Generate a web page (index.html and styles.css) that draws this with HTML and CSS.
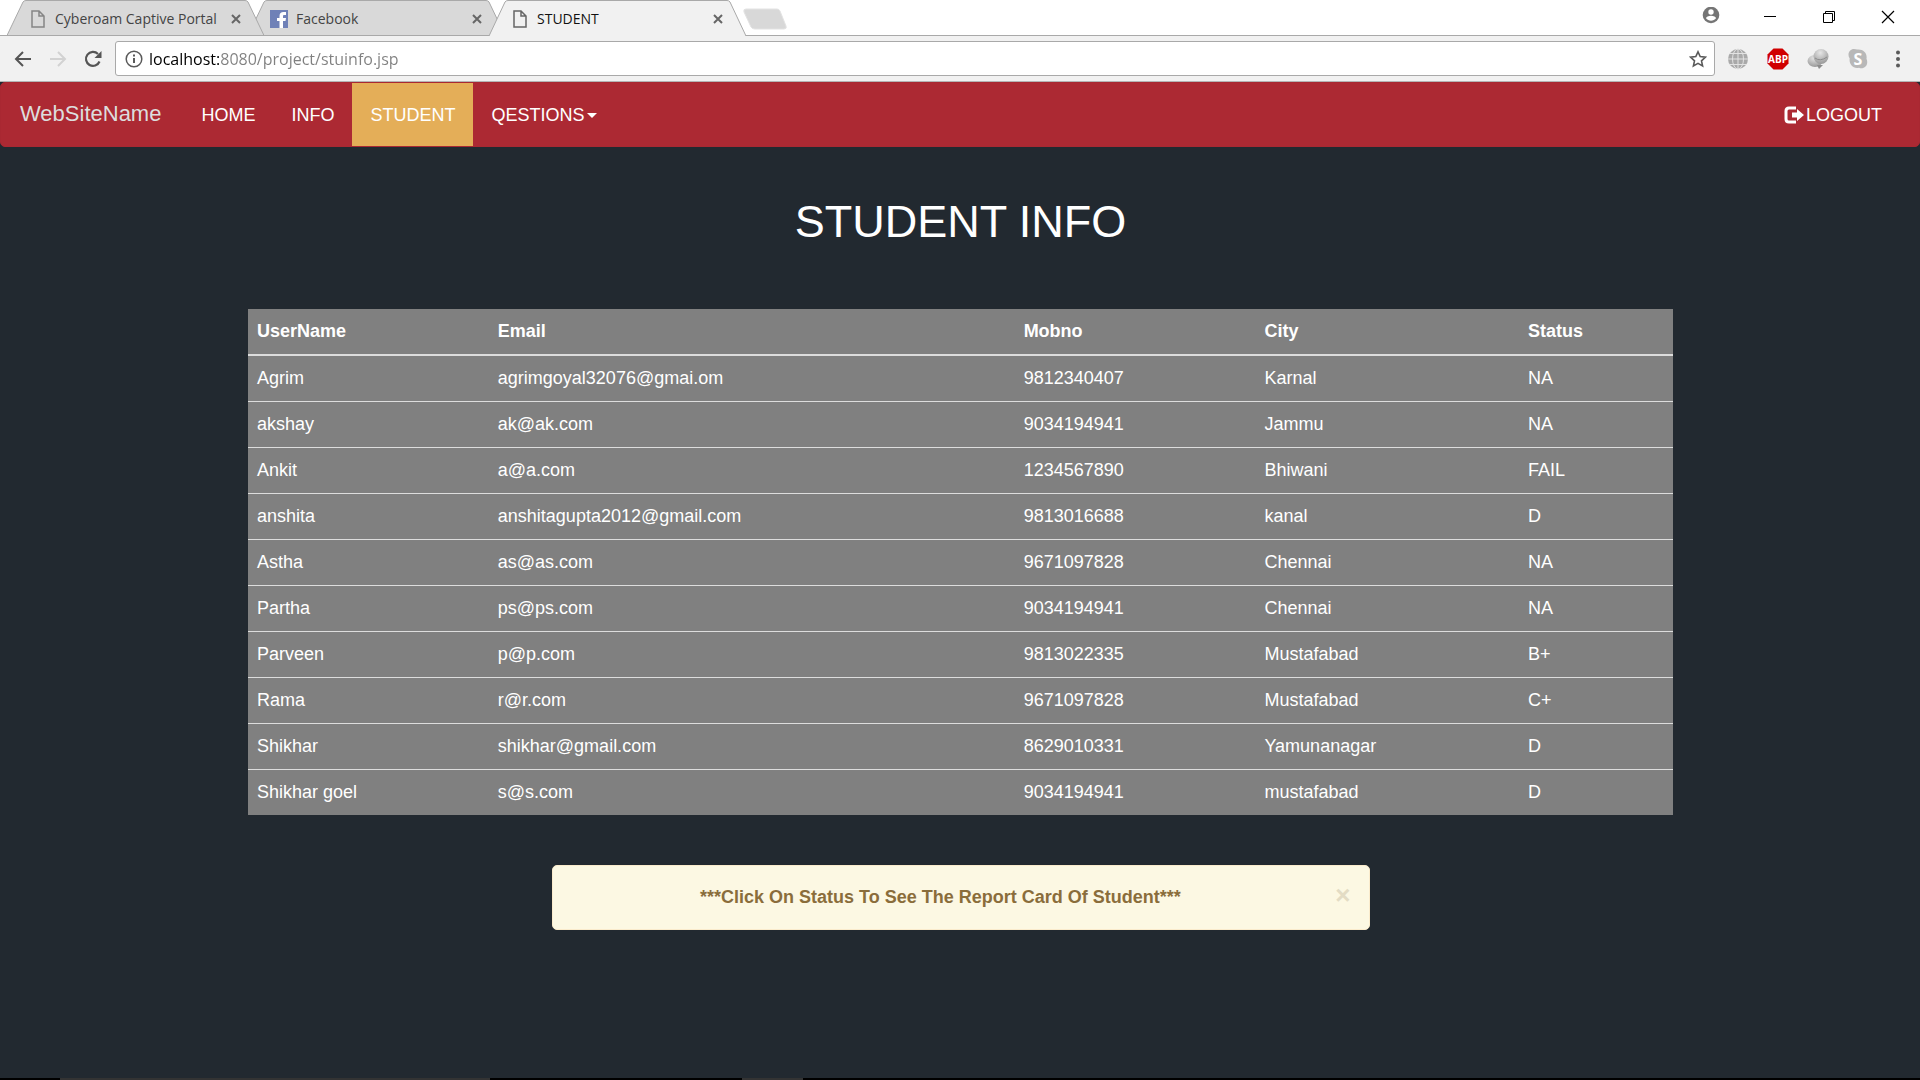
FILE: index.html
```html
<!DOCTYPE html>
<html lang="en">
<head>
<meta charset="utf-8">
<title>STUDENT</title>
<link rel="stylesheet" href="styles.css">
</head>
<body>
<div class="tabstrip">
  <div class="tab tab-first">
    <svg class="tab-shape" viewBox="0 0 257 36"><path d="M0 35.500L16 2Q17 .5 19 .5H238Q240 .5 241 2L257 35.500z" fill="#d9d9d9" stroke="#a9a9a9"/></svg>
    <svg class="tab-icon" viewBox="0 0 18 18"><path d="M3 1h7l5 5v11H3zM10 1v5h5" fill="none" stroke="#858585" stroke-width="1.500"/></svg>
    <span class="tab-title">Cyberoam Captive Portal</span>
    <button class="tab-close" aria-label="Close tab"><svg viewBox="0 0 10 10"><path d="M1 1l8 8M9 1l-8 8"/></svg></button>
  </div>
  <div class="tab">
    <svg class="tab-shape" viewBox="0 0 257 36"><path d="M0 35.500L16 2Q17 .5 19 .5H238Q240 .5 241 2L257 35.500z" fill="#d9d9d9" stroke="#a9a9a9"/></svg>
    <svg class="tab-icon" viewBox="0 0 18 18"><path d="M0 0h18v18H0z" fill="#6f81b7"/><path d="M9.500 18v-7H7V8h2.500V6c0-2.500 1.500-4 4-4H16v3h-1.500C13.300 5 13 5.500 13 6.300V8h3l-.5 3H13v7z" fill="#fff"/></svg>
    <span class="tab-title">Facebook</span>
    <button class="tab-close" aria-label="Close tab"><svg viewBox="0 0 10 10"><path d="M1 1l8 8M9 1l-8 8"/></svg></button>
  </div>
  <div class="tab tab-active">
    <svg class="tab-shape" viewBox="0 0 257 36"><path d="M0 36L16 2Q17 .5 19 .5H238Q240 .5 241 2L257 36" fill="#f1f1f1" stroke="#a9a9a9"/></svg>
    <svg class="tab-icon" viewBox="0 0 18 18"><path d="M3 1h7l5 5v11H3zM10 1v5h5" fill="none" stroke="#666" stroke-width="1.500"/></svg>
    <span class="tab-title">STUDENT</span>
    <button class="tab-close" aria-label="Close tab"><svg viewBox="0 0 10 10"><path d="M1 1l8 8M9 1l-8 8"/></svg></button>
  </div>
  <button class="new-tab" aria-label="New tab"><svg viewBox="0 0 44 22"><path d="M3 1h31q2 0 3 2l6 15q1 3-2 3H12q-3 0-4-2L1 4q-1-3 2-3z" fill="#d8d8d8" stroke="#e3e3e3"/></svg></button>
  <div class="window-controls">
    <button aria-label="Profile"><svg viewBox="0 0 18 18"><circle cx="9" cy="8" r="8.300" fill="#757575"/><circle cx="9" cy="5" r="2.700" fill="#fff"/><path d="M4 11.300c0-3.500 10-3.500 10 0-2.200 3.200-7.800 3.200-10 0z" fill="#fff"/></svg></button>
    <button aria-label="Minimize"><svg viewBox="0 0 18 18"><path d="M3 9.500h12" stroke="#000"/></svg></button>
    <button aria-label="Restore"><svg viewBox="0 0 18 18"><path d="M3.500 6.500h9v9h-9zM5.500 6.500v-2h9v9h-2" fill="none" stroke="#000"/></svg></button>
    <button aria-label="Close"><svg viewBox="0 0 18 18"><path d="M3 4l12 12M15 4L3 16" stroke="#000" stroke-width="1.200"/></svg></button>
  </div>
</div>

<div class="toolbar">
  <button class="nav-button" aria-label="Back"><svg viewBox="0 0 18 18"><path d="M17 9H2M9 2L2 9l7 7" fill="none" stroke="#555" stroke-width="2"/></svg></button>
  <button class="nav-button" aria-label="Forward"><svg viewBox="0 0 18 18"><path d="M1 9h15M9 2l7 7-7 7" fill="none" stroke="#d2d2d2" stroke-width="2"/></svg></button>
  <button class="nav-button" aria-label="Reload"><svg viewBox="0 0 18 18"><path d="M15.500 11.500A7 7 0 1 1 14 4" fill="none" stroke="#555" stroke-width="2.200"/><path d="M17.500 1v7h-7z" fill="#555"/></svg></button>
  <div class="address">
    <svg class="address-icon" viewBox="0 0 18 18"><circle cx="9" cy="9" r="7.800" fill="none" stroke="#5a5a5a" stroke-width="1.500"/><path d="M9 8v5M9 4.500v2" stroke="#5a5a5a" stroke-width="2"/></svg>
    <input class="address-input" aria-label="Address" type="text" value="localhost:8080/project/stuinfo.jsp">
    <button class="nav-button" aria-label="Bookmark"><svg viewBox="0 0 18 18"><path d="M9 1.800l2.200 4.800 5.200.6-3.900 3.600 1.100 5.200L9 13.400 4.400 16l1.100-5.200L1.600 7.200l5.200-.6z" fill="none" stroke="#5a5a5a" stroke-width="1.600"/></svg></button>
  </div>
  <div class="extensions">
    <button aria-label="Network"><svg viewBox="0 0 22 22"><circle cx="11" cy="11" r="10" fill="#a9a9a9"/><path d="M1 11h20M11 1v20M3 5.500h16M3 16.500h16" stroke="#e2e2e2"/><ellipse cx="11" cy="11" rx="5.500" ry="10" fill="none" stroke="#e2e2e2"/></svg></button>
    <button aria-label="Adblock Plus"><svg viewBox="0 0 22 22"><path d="M6.500.5h9l6 6v9l-6 6h-9l-6-6v-9z" fill="#d00000"/><text class="badge-text" x="11" y="15" text-anchor="middle">ABP</text></svg></button>
    <button aria-label="Messenger"><svg viewBox="0 0 22 22"><defs><radialGradient id="ball" cx=".45" cy=".25" r=".75"><stop offset="0" stop-color="#e6e6e6"/><stop offset="1" stop-color="#999"/></radialGradient></defs><ellipse cx="8" cy="13" rx="7.500" ry="6" fill="url(#ball)"/><path d="M10 17h6l-4 4z" fill="#8c8c8c"/><circle cx="14" cy="8.500" r="7.500" fill="url(#ball)"/><path d="M8 10q5 4 12-1" stroke="#8c8c8c" fill="none"/></svg></button>
    <button aria-label="Skype"><svg viewBox="0 0 22 22"><path d="M7 1q2 0 3 .6c6-.8 10.500 3.400 9.500 9.200 2.700 6.200-2.500 11-7.500 8.900C6 21.300 1.700 16 2.700 10.500-.2 6 2.500 1 7 1z" fill="#b8b8b8"/><text class="skype-text" x="11" y="17" text-anchor="middle">S</text></svg></button>
    <button aria-label="Menu"><svg viewBox="0 0 22 22"><g fill="#5a5a5a"><circle cx="11" cy="4.500" r="2"/><circle cx="11" cy="11" r="2"/><circle cx="11" cy="17.500" r="2"/></g></svg></button>
  </div>
</div>

<nav class="navbar">
  <a class="brand" href="#">WebSiteName</a>
  <a class="nav-link" href="#">HOME</a>
  <a class="nav-link" href="#">INFO</a>
  <a class="nav-link active" href="#">STUDENT</a>
  <a class="nav-link" href="#">QESTIONS<span class="caret"></span></a>
  <a class="nav-link logout" href="#"><svg viewBox="0 0 20 18"><path d="M12 2H5Q2 2 2 5v8q0 3 3 3h7" fill="none" stroke="#fff" stroke-width="3"/><path d="M8 6.500h5V3l7 6-7 6v-3.500H8z" fill="#fff"/></svg>LOGOUT</a>
</nav>

<main class="content">
  <h1 class="title">STUDENT INFO</h1>
  <table class="students">
    <colgroup><col class="col-name"><col class="col-email"><col class="col-mobile"><col class="col-city"><col></colgroup>
    <thead>
      <tr><th>UserName</th><th>Email</th><th>Mobno</th><th>City</th><th>Status</th></tr>
    </thead>
    <tbody>
      <tr><td>Agrim</td><td>agrimgoyal32076@gmai.om</td><td>9812340407</td><td>Karnal</td><td>NA</td></tr>
      <tr><td>akshay</td><td>ak@ak.com</td><td>9034194941</td><td>Jammu</td><td>NA</td></tr>
      <tr><td>Ankit</td><td>a@a.com</td><td>1234567890</td><td>Bhiwani</td><td>FAIL</td></tr>
      <tr><td>anshita</td><td>anshitagupta2012@gmail.com</td><td>9813016688</td><td>kanal</td><td>D</td></tr>
      <tr><td>Astha</td><td>as@as.com</td><td>9671097828</td><td>Chennai</td><td>NA</td></tr>
      <tr><td>Partha</td><td>ps@ps.com</td><td>9034194941</td><td>Chennai</td><td>NA</td></tr>
      <tr><td>Parveen</td><td>p@p.com</td><td>9813022335</td><td>Mustafabad</td><td>B+</td></tr>
      <tr><td>Rama</td><td>r@r.com</td><td>9671097828</td><td>Mustafabad</td><td>C+</td></tr>
      <tr><td>Shikhar</td><td>shikhar@gmail.com</td><td>8629010331</td><td>Yamunanagar</td><td>D</td></tr>
      <tr><td>Shikhar goel</td><td>s@s.com</td><td>9034194941</td><td>mustafabad</td><td>D</td></tr>
    </tbody>
  </table>
  <div class="alert" role="alert">
    <strong class="alert-text">***Click On Status To See The Report Card Of Student***</strong>
    <button class="alert-close" aria-label="Close">×</button>
  </div>
</main>

<div class="taskbar"><span class="task"></span><span class="task task-small"></span></div>
</body>
</html>
```
FILE: styles.css
```css
* { box-sizing: border-box; }

body {
  margin: 0;
  min-height: 100vh;
  display: flex;
  flex-direction: column;
  background: #222930;
  color: #fff;
  font: 18px/25px "Liberation Sans", Arial, sans-serif;
}

button {
  padding: 0;
  border: 0;
  background: none;
  color: inherit;
  font: inherit;
}

svg { display: block; }
a { text-decoration: none; }

/* Tab strip */
.tabstrip {
  display: flex;
  align-items: flex-start;
  height: 36px;
  padding-left: 7px;
  background: #fff;
  border-bottom: 1px solid #a9a9a9;
  color: #444;
  font: 14px/20px "Open Sans", "Noto Sans", sans-serif;
}

.tab {
  position: relative;
  isolation: isolate;
  display: flex;
  align-items: center;
  width: 257px;
  height: 36px;
  margin-left: -16px;
  padding: 2px 23px 0 22px;
}

.tab-first { z-index: 1; margin-left: 0; }
.tab-active { z-index: 2; color: #111; }

.tab-shape {
  position: absolute;
  inset: 0;
  z-index: -1;
  width: 257px;
  height: 36px;
}

.tab-icon { width: 18px; height: 18px; margin-right: 8px; }
.tab-title { flex: 1; white-space: nowrap; }
.tab-close svg { width: 10px; height: 10px; stroke: #666; stroke-width: 2; }

.new-tab { margin: 8px 0 0 -3px; }
.new-tab svg { width: 44px; height: 22px; }

.window-controls {
  display: flex;
  gap: 41px;
  margin: 7px 23px 0 auto;
}

.window-controls svg { width: 18px; height: 18px; }

/* Toolbar */
.toolbar {
  display: flex;
  align-items: center;
  height: 46px;
  padding: 0 11px 0 14px;
  background: #f1f1f1;
  border-bottom: 1px solid #b5b5b5;
}

.nav-button { margin-right: 17px; }
.nav-button svg { width: 18px; height: 18px; }

.address {
  display: flex;
  flex: 1;
  align-items: center;
  height: 35px;
  margin-left: -4px;
  padding-left: 9px;
  border: 1px solid #a9a9a9;
  border-radius: 3px;
  background: #fff;
}

.address .nav-button { margin-right: 7px; }
.address-icon { width: 18px; height: 18px; margin-right: 6px; }

.address-input {
  flex: 1;
  padding: 0;
  border: 0;
  outline: 0;
  background: linear-gradient(90deg, #000 70px, #808080 70px);
  background-clip: text;
  color: transparent;
  font: 16px/24px "Open Sans", "Noto Sans", sans-serif;
}

.extensions {
  display: flex;
  gap: 18px;
  margin-left: 12px;
}

.extensions svg { width: 22px; height: 22px; }

.badge-text {
  fill: #fff;
  font: bold 10px "Open Sans", sans-serif;
}

.skype-text {
  fill: #fff;
  font: bold 16px "Open Sans", sans-serif;
}

/* Site navigation */
.navbar {
  display: flex;
  height: 65px;
  padding: 0 19px;
  border: 1px solid #a92832;
  border-radius: 5px;
  background: #ac2933;
  line-height: 62px;
}

.brand {
  margin-right: 22px;
  color: #ddd;
  font-size: 22px;
}

.nav-link {
  display: flex;
  align-items: center;
  padding: 0 18px;
  color: #fff;
}

.active { background: #e4ae58; }

.caret {
  margin: 2px 0 0 3px;
  border: 5px solid transparent;
  border-top-color: #fff;
  border-bottom: 0;
}

.logout { margin-left: auto; }
.logout svg { width: 20px; height: 18px; margin-right: 2px; }

/* Page content */
.content {
  flex: 1;
  padding: 50px 247px 0 248px;
}

.title {
  margin: 0;
  font-size: 45px;
  font-weight: 400;
  line-height: 50px;
  text-align: center;
}

.students {
  width: 100%;
  margin-top: 62px;
  border-spacing: 0;
  table-layout: fixed;
  background: #808080;
}

.col-name, .col-mobile { width: 16.9%; }
.col-email { width: 36.9%; }
.col-city { width: 18.5%; }

.students th,
.students td {
  padding: 10px 9px;
  border-bottom: 1px solid #ddd;
  text-align: left;
}

.students th { border-bottom-width: 2px; }
.students tr:last-child td { border-bottom: 0; }

.alert {
  display: flex;
  align-items: center;
  gap: 25px;
  width: 818px;
  max-width: 100%;
  height: 65px;
  margin: 50px auto;
  padding: 0 18px;
  border: 1px solid #faebcc;
  border-radius: 5px;
  background: #fcf8e3;
  color: #8a6d3b;
}

.alert-text { flex: 1; text-align: center; }

.alert-close {
  padding-bottom: 5px;
  color: #e3dcc4;
  font-size: 26px;
  font-weight: 700;
}

/* Taskbar edge */
.taskbar {
  display: flex;
  gap: 252px;
  height: 2px;
  padding-left: 60px;
  background: #000;
}

.task { width: 430px; background: #333; }
.task-small { width: 61px; }
```
